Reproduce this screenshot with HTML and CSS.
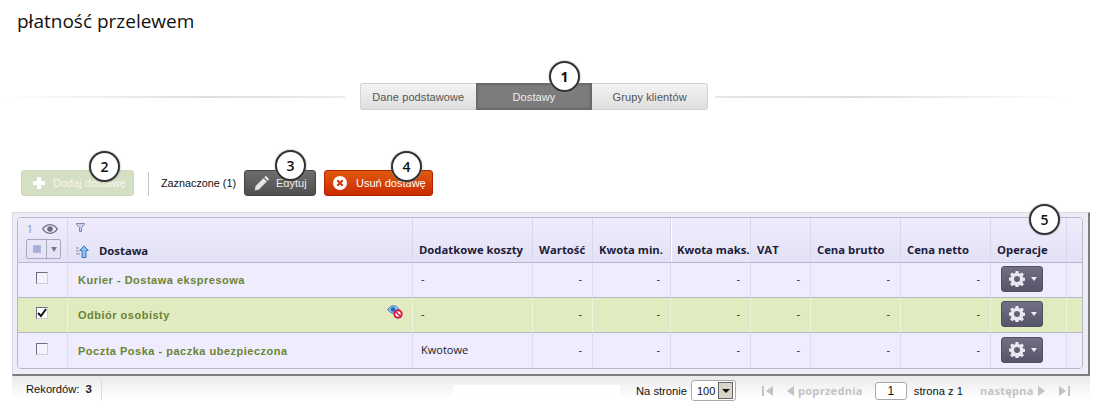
FILE: index.html
```html
<!DOCTYPE html>
<html lang="pl">
<head>
<meta charset="utf-8">
<title>płatność przelewem</title>
<link rel="stylesheet" href="styles.css">
</head>
<body>
<svg class="defs" width="0" height="0" aria-hidden="true">
  <symbol id="gear" viewBox="0 0 16 16">
    <path fill="#e9e8f2" fill-rule="evenodd" d="M6.6 0h2.8l.4 2.2 1.2.5L12.9 1.400l2 2-1.300 1.900.5 1.200 2.200.4v2.800l-2.200.4-.5 1.200 1.300 1.900-2 2-1.900-1.300-1.200.5-.4 2.200H6.600l-.4-2.200-1.200-.5-1.900 1.300-2-2 1.300-1.900-.5-1.200L-.3 9.400V6.600l2.200-.4.5-1.200L1.100 3.400l2-2L5 2.700l1.200-.5zM8 5a3 3 0 1 0 0 6 3 3 0 0 0 0-6z"/>
  </symbol>
</svg>

<h1 class="title">płatność przelewem</h1>

<nav class="tabs-bar">
  <span class="tabs-line tabs-line-left"></span>
  <div class="tabs">
    <a class="tab">Dane podstawowe</a>
    <a class="tab tab-active">Dostawy</a>
    <a class="tab">Grupy klientów</a>
    <span class="callout callout-1">1</span>
  </div>
  <span class="tabs-line tabs-line-right"></span>
</nav>

<div class="toolbar">
  <a class="btn btn-add">
    <svg class="btn-icon" viewBox="0 0 14 14"><path fill="#fff" d="M5 1h4v4h4v4H9v4H5V9H1V5h4z"/></svg>
    <span>Dodaj dostawę</span>
    <span class="callout callout-2">2</span>
  </a>
  <span class="toolbar-sep"></span>
  <span class="selected-label">Zaznaczone (1)</span>
  <a class="btn btn-edit">
    <svg class="btn-icon btn-icon-pencil" viewBox="0 0 16 16"><path fill="#e4e4e4" d="M11.800.8l3.400 3.400-1.600 1.600-3.400-3.400zM9.400 3.200l3.400 3.400-7.800 7.800-4.200 1 .8-4.400z"/></svg>
    <span>Edytuj</span>
    <span class="callout callout-3">3</span>
  </a>
  <a class="btn btn-del">
    <svg class="btn-icon" viewBox="0 0 14 14"><circle cx="7" cy="7" r="7" fill="#fff"/><path stroke="#d23a10" stroke-width="2.200" d="M4.300 4.300l5.400 5.400M9.700 4.300l-5.400 5.400"/></svg>
    <span>Usuń dostawę</span>
    <span class="callout callout-4">4</span>
  </a>
</div>

<section class="grid-outer">
  <span class="callout callout-5">5</span>
  <div class="grid-inner">
    <table class="grid">
      <colgroup>
        <col class="c0"><col class="c1"><col class="c2"><col class="c3"><col class="c4"><col class="c5"><col class="c6"><col class="c7"><col class="c8"><col class="c9"><col class="c10">
      </colgroup>
      <thead>
        <tr>
          <th class="th-select">
            <div class="vis-row">
              <span class="vis-count">1</span>
              <svg class="eye" viewBox="0 0 16 10"><path fill="#6d6c80" fill-rule="evenodd" d="M8 0c3.600 0 6.400 2.400 8 5-1.600 2.600-4.400 5-8 5s-6.400-2.400-8-5c1.600-2.600 4.400-5 8-5zM8 1.200C5.300 1.200 3 3 1.500 5 3 7 5.300 8.800 8 8.800S13 7 14.500 5C13 3 10.700 1.200 8 1.200z"/><circle cx="8" cy="5" r="2.800" fill="#6d6c80"/></svg>
            </div>
            <div class="sel-group">
              <span class="sel-box"><i></i></span>
              <span class="sel-drop"><i></i></span>
            </div>
          </th>
          <th class="th-name">
            <svg class="funnel" viewBox="0 0 9 9"><path fill="#cfd2ee" stroke="#7d87b5" stroke-width="1" d="M.5.500h8v1L5.500 4.500v4h-2v-4L.5 1.500z"/></svg>
            <div class="name-head">
              <svg class="sort" viewBox="0 0 13 13"><path fill="#8ec0ee" stroke="#3c78c0" d="M8 .8l4.300 4.700H10v7H6v-7H3.700z"/><path stroke="#8b8ba8" d="M0 3h3M0 6h2.500M0 9h4"/></svg>
              <span>Dostawa</span>
            </div>
          </th>
          <th>Dodatkowe koszty</th>
          <th>Wartość</th>
          <th class="th-kmin">Kwota min.</th>
          <th class="th-kmax">Kwota maks.</th>
          <th>VAT</th>
          <th>Cena brutto</th>
          <th>Cena netto</th>
          <th>Operacje</th>
          <th></th>
        </tr>
      </thead>
      <tbody>
        <tr>
          <td class="td-check"><span class="check"></span></td>
          <td class="td-name"><div class="name-cell"><span>Kurier - Dostawa ekspresowa</span></div></td>
          <td>-</td><td class="num">-</td><td class="num">-</td><td class="num">-</td><td class="num">-</td><td class="num">-</td><td class="num">-</td>
          <td class="td-op"><a class="gear-btn"><svg class="gear"><use href="#gear"/></svg><i class="caret"></i></a></td>
          <td></td>
        </tr>
        <tr class="row-selected">
          <td class="td-check"><span class="check check-on"><svg viewBox="0 0 10 10"><path fill="none" stroke="#111" stroke-width="2" d="M1 5l3 3 5-7"/></svg></span></td>
          <td class="td-name"><div class="name-cell"><span>Odbiór osobisty</span>
            <svg class="hidden-icon" viewBox="0 0 16 14"><path fill="#9cc8f0" stroke="#2f78c8" d="M.8 4.500C2.500 2 4.500.8 6.500.8s4 1.200 5.700 3.700c-1.700 2.500-3.700 3.700-5.700 3.700S2.500 7 .8 4.500z"/><circle cx="6" cy="4.500" r="2.300" fill="#1f66b8"/><circle cx="11" cy="9" r="4.700" fill="#d8153f"/><circle cx="11" cy="9" r="2.700" fill="#fff"/><path stroke="#d8153f" stroke-width="1.600" d="M8.800 6.800l4.400 4.400"/></svg></div></td>
          <td>-</td><td class="num">-</td><td class="num">-</td><td class="num">-</td><td class="num">-</td><td class="num">-</td><td class="num">-</td>
          <td class="td-op"><a class="gear-btn"><svg class="gear"><use href="#gear"/></svg><i class="caret"></i></a></td>
          <td></td>
        </tr>
        <tr>
          <td class="td-check"><span class="check"></span></td>
          <td class="td-name"><div class="name-cell"><span>Poczta Poska - paczka ubezpieczona</span></div></td>
          <td>Kwotowe</td><td class="num">-</td><td class="num">-</td><td class="num">-</td><td class="num">-</td><td class="num">-</td><td class="num">-</td>
          <td class="td-op"><a class="gear-btn"><svg class="gear"><use href="#gear"/></svg><i class="caret"></i></a></td>
          <td></td>
        </tr>
      </tbody>
    </table>
  </div>
</section>

<footer class="pager">
  <div class="pager-left">Rekordów: <b>3</b></div>
  <span class="pager-patch"></span>
  <div class="pager-right">
    <span>Na stronie</span>
    <span class="per-page"><span>100</span><i class="per-drop"></i></span>
    <svg class="nav nav-first" viewBox="0 0 11 10"><path fill="#c3c3c3" d="M0 0h2v10H0zM11 0v10L4 5z"/></svg>
    <a class="pg pg-prev"><svg class="nav" viewBox="0 0 7 10"><path fill="#c3c3c3" d="M7 0v10L0 5z"/></svg>poprzednia</a>
    <span class="page-input">1</span>
    <span class="page-of">strona z 1</span>
    <a class="pg pg-next">następna<svg class="nav" viewBox="0 0 7 10"><path fill="#c3c3c3" d="M0 0v10l7-5z"/></svg></a>
    <svg class="nav nav-last" viewBox="0 0 11 10"><path fill="#c3c3c3" d="M0 0v10l7-5zM9 0h2v10H9z"/></svg>
  </div>
</footer>
</body>
</html>
```
FILE: styles.css
```css
* { box-sizing: border-box; }
html, body { margin: 0; padding: 0; }
body {
  width: 1105px;
  height: 419px;
  overflow: hidden;
  background: #fff;
  color: #111;
  font-family: "Open Sans", "Noto Sans", sans-serif;
  font-size: 11px;
  position: relative;
}
.defs { position: absolute; }

.title {
  margin: 0;
  padding: 8px 0 0 17px;
  height: 83px;
  font-size: 19px;
  line-height: 26px;
  font-weight: 400;
  color: #111;
}

/* tabs */
.tabs-bar {
  display: flex;
  align-items: center;
  height: 27px;
}
.tabs-line { display: block; height: 2px; margin-top: 1px; }
.tabs-line-left {
  width: 345px;
  margin-right: 15px;
  background: linear-gradient(90deg, #fff, #dedede 60%, #ececec);
}
.tabs-line-right {
  width: 355px;
  margin-left: 7px;
  background: linear-gradient(90deg, #e6e6e6, #dedede 40%, #fff);
}
.tabs {
  position: relative;
  display: flex;
  width: 348px;
  height: 27px;
}
.tab {
  flex: 1;
  display: flex;
  align-items: center;
  justify-content: center;
  color: #555;
  font-family: "Liberation Sans", sans-serif;
  font-size: 11px;
  letter-spacing: .1px;
  background: linear-gradient(#f3f3f3, #dedede);
  border: 1px solid #d2d2d2;
}
.tab:first-child { border-right: 0; border-radius: 3px 0 0 3px; }
.tab:nth-child(3) { border-left: 0; border-radius: 0 3px 3px 0; }
.tab-active {
  color: #eee;
  background: #7c7c7c;
  border: 1px solid #686868;
  box-shadow: inset 0 0 3px #555;
}

/* callouts */
.callout {
  position: absolute;
  width: 31px;
  height: 31px;
  border-radius: 50%;
  background: #fff;
  border: 2px solid #333;
  box-shadow: 0 0 2px #999;
  color: #111;
  font-family: "Open Sans", sans-serif;
  font-size: 14px;
  font-weight: 600;
  line-height: 27px;
  text-align: center;
  z-index: 5;
}
.callout-1 { left: 189px; top: -22px; font-weight: 700; }
.callout-2 { left: 67px; top: -20px; }
.callout-3 { left: 30px; top: -21px; }
.callout-4 { left: 66px; top: -20px; }
.callout-5 { right: 28px; top: -9px; }

/* toolbar */
.toolbar {
  display: flex;
  align-items: center;
  height: 26px;
  margin-top: 60px;
  padding-left: 21px;
}
.btn {
  position: relative;
  display: flex;
  align-items: center;
  height: 26px;
  border-radius: 3px;
  font-family: "Liberation Sans", sans-serif;
  font-size: 11px;
  white-space: nowrap;
  color: #fff;
}
.btn-icon { width: 14px; height: 14px; flex: none; margin-right: 7px; }
.btn-icon-pencil { width: 16px; height: 16px; margin-right: 6px; }
.btn-add {
  width: 113px;
  padding-left: 10px;
  background: #d5dfc4;
  border: 1px solid #cdd8ba;
  color: #f5f8ee;
}
.btn-edit {
  width: 72px;
  padding-left: 9px;
  background: linear-gradient(#6d6d6d, #4f4f4f);
  border: 1px solid #444;
  color: #eee;
}
.btn-del {
  width: 109px;
  padding-left: 8px;
  margin-left: 8px;
  background: linear-gradient(#e05a10, #c92a00);
  border: 1px solid #b02200;
}
.btn-del .btn-icon { margin-right: 9px; }
.toolbar-sep {
  width: 1px;
  height: 24px;
  margin: 2px 12px 0 14px;
  background: #c4c4c4;
}
.selected-label {
  width: 83px;
  font-family: "Liberation Sans", sans-serif;
  font-size: 10.800px;
  color: #111;
}

/* grid */
.grid-outer {
  position: relative;
  width: 1078px;
  height: 164px;
  margin: 16px 0 0 12px;
  padding: 4px 5px 6px 4px;
  background: #eeedf6;
  border-top: 1px solid #dcdae8;
  border-left: 1px solid #d8d6e4;
  border-right: 2px solid #7d7d7d;
  border-bottom: 2px solid #7d7d7d;
}
.grid-inner {
  border: 1px solid #b9b7cd;
  border-radius: 4px;
  overflow: hidden;
  height: 152px;
}
.grid {
  width: 1067px;
  table-layout: fixed;
  border-collapse: separate;
  border-spacing: 0;
}
.c0 { width: 50px; }
.c1 { width: 345px; }
.c2 { width: 120px; }
.c3 { width: 60px; }
.c4 { width: 78px; }
.c5 { width: 80px; }
.c6 { width: 60px; }
.c7 { width: 90px; }
.c8 { width: 90px; }
.c9 { width: 76px; }
.c10 { width: 18px; }

.grid th {
  height: 45px;
  padding: 0 0 4px 6px;
  vertical-align: bottom;
  text-align: left;
  font-size: 11.300px;
  font-weight: 700;
  line-height: 16px;
  color: #1d1c3a;
  white-space: nowrap;
  background: linear-gradient(#eeecfc, #e3e1f5);
  border-right: 1px solid #d9d7e9;
  border-bottom: 1px solid #b9b7cd;
}
.grid th.th-kmax { background: linear-gradient(#eeecfc, #e6e4f6); box-shadow: inset 1px 0 0 #fff; }
.grid td {
  height: 35px;
  padding: 0 0 3px 8px;
  font-size: 11px;
  color: #222;
  background: #eeecfd;
  border-right: 1px solid #dddbee;
  border-bottom: 1px solid #b9b7cd;
}
.grid tbody tr:last-child td { border-bottom: 0; }
.grid th:last-child, .grid td:last-child { border-right: 0; }
.grid td.num { text-align: right; padding-right: 10px; padding-left: 0; }
.row-selected td { background: #e0ecc0 !important; border-right-color: #eef5dc !important; }

.grid th.th-select { padding: 0; vertical-align: top; }
.vis-row { display: flex; align-items: center; height: 16px; margin-top: 3px; padding-left: 9px; }
.vis-count { font-size: 10px; font-weight: 400; color: #8a89a0; width: 15px; }
.eye { width: 16px; height: 10px; }
.sel-group {
  display: flex;
  width: 35px;
  height: 20px;
  margin: 2px 0 0 8px;
  border: 1px solid #a9a8bb;
  border-radius: 2px;
}
.sel-box { flex: 1; display: flex; align-items: center; justify-content: center; border-right: 1px solid #a9a8bb; }
.sel-box i { width: 8px; height: 8px; background: #a4aee0; border: 1px solid #b4b4c8; }
.sel-drop { width: 13px; display: flex; align-items: center; justify-content: center; }
.sel-drop i { border: 3px solid transparent; border-top: 5px solid #77778f; border-bottom: 0; }

.grid th.th-name { padding: 0 0 3px 8px; }
.funnel { display: block; width: 9px; height: 9px; margin-bottom: 11px; }
.name-head { display: flex; align-items: center; gap: 10px; }
.sort { width: 13px; height: 13px; }

.td-check { text-align: center; }
.grid td.td-check { padding: 0 1px 7px 0; }
.check {
  display: inline-block;
  width: 12px;
  height: 12px;
  background: #f4f3fb;
  border: 1px solid;
  border-color: #6f6e80 #cfcfdc #cfcfdc #6f6e80;
  vertical-align: middle;
}
.check-on { background: #fff; }
.check svg { display: block; width: 10px; height: 10px; }

.grid td.td-name { padding: 0 0 0 10px; }
.name-cell {
  display: flex;
  align-items: center;
  justify-content: space-between;
  padding-right: 9px;
  font-family: "Liberation Sans", sans-serif;
  font-size: 11px;
  font-weight: 700;
  letter-spacing: .5px;
  color: #6b8433;
}
.hidden-icon { width: 16px; height: 14px; margin-top: -6px; }

.grid td.td-op { padding: 0 0 2px 10px; }
.gear-btn {
  display: flex;
  align-items: center;
  width: 42px;
  height: 26px;
  padding-left: 7px;
  border-radius: 3px;
  background: linear-gradient(#716f84, #565468);
  border: 1px solid #514f63;
}
.gear { width: 16px; height: 16px; }
.caret {
  margin-left: 6px;
  border: 3.500px solid transparent;
  border-top: 4px solid #efeef6;
  border-bottom: 0;
}

/* footer */
.pager {
  position: relative;
  display: flex;
  align-items: flex-start;
  height: 43px;
  margin: 0 15px 0 12px;
  padding-top: 4px;
  background: linear-gradient(#eaeaea, #fff 22px);
  font-family: "Liberation Sans", sans-serif;
  font-size: 11.200px;
  color: #111;
}
.pager-left {
  width: 90px;
  height: 21px;
  padding: 3px 0 0 14px;
  border-right: 1px solid #ddd;
  white-space: nowrap;
}
.pager-left b { margin-left: 3px; font-size: 11.500px; color: #222; }
.pager-patch {
  position: absolute;
  left: 441px;
  top: 9px;
  width: 167px;
  height: 12px;
  background: #fff;
}
.pager-right {
  position: relative;
  display: flex;
  align-items: center;
  height: 21px;
  margin-left: 534px;
}
.per-page {
  display: flex;
  align-items: center;
  justify-content: space-between;
  width: 45px;
  height: 21px;
  margin-left: 4px;
  padding: 0 2px 0 5px;
  background: #fff;
  border: 1px solid #a9a9a9;
  border-radius: 3px;
  font-size: 11px;
}
.per-drop {
  display: flex;
  align-items: center;
  justify-content: center;
  width: 15px;
  height: 17px;
  background: #d8d4c8;
  border: 1px solid #666;
}
.per-drop::after {
  content: "";
  border: 4px solid transparent;
  border-top: 4px solid #111;
  border-bottom: 0;
}
.nav { display: block; width: 7px; height: 10px; }
.nav-first, .nav-last { width: 11px; }
.nav-first { margin-left: 26px; }
.pg {
  display: flex;
  align-items: center;
  gap: 4px;
  font-family: "Open Sans", sans-serif;
  font-weight: 700;
  font-size: 11px;
  letter-spacing: .3px;
  color: #c3c3c3;
}
.pg-prev { margin-left: 14px; }
.page-input {
  width: 32px;
  height: 18px;
  margin-left: 12px;
  border: 1px solid #a9a9a9;
  border-radius: 3px;
  background: #fff;
  text-align: center;
  line-height: 16px;
  font-size: 12px;
}
.page-of { margin-left: 7px; }
.pg-next { margin-left: 17px; }
.nav-last { margin-left: 14px; }
```
